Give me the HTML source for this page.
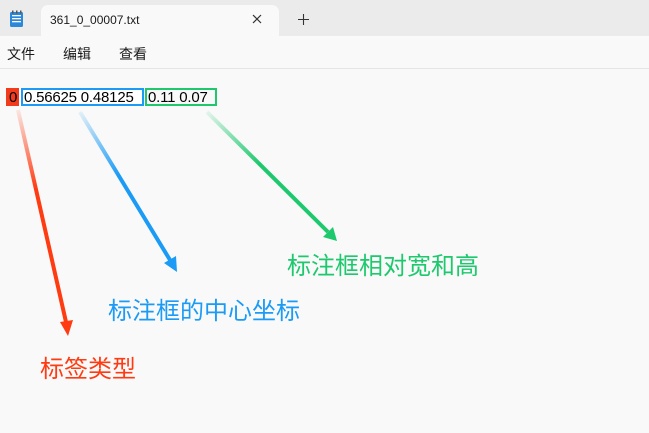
<!DOCTYPE html>
<html><head><meta charset="utf-8"><style>
*{margin:0;padding:0;box-sizing:border-box}
body{width:649px;height:433px;background:#f9f9f9;font-family:"Liberation Sans","Noto Sans CJK SC",sans-serif;position:relative;overflow:hidden}
.tabbar{position:absolute;left:0;top:0;width:649px;height:36px;background:#ebebeb}
.tab{position:absolute;left:41px;top:5px;width:238px;height:32px;background:#f9f9f9;border-radius:7px 7px 0 0}
.menu{position:absolute;top:36px;left:0;width:649px;height:33px;border-bottom:1px solid #e5e5e5;font-size:14px;color:#1a1a1a}
.menu span{position:absolute;top:8px}
.cjk{font-family:"Noto Sans CJK SC",sans-serif}
.t{position:absolute;font-size:15px;color:#000;top:88px;height:18px;line-height:15px;letter-spacing:-0.2px;white-space:nowrap;overflow:hidden}
.lbl{position:absolute;font-size:24px;line-height:26px;font-family:"Noto Sans CJK SC",sans-serif}
</style></head><body>
<div class="tabbar"></div>
<div class="tab"></div>
<svg style="position:absolute;left:9px;top:10px" width="16" height="18" viewBox="0 0 16 18"><rect x="1" y="2" width="13" height="15" rx="1.5" fill="#2b88d8"/><rect x="3" y="5" width="9" height="1.3" fill="#fff"/><rect x="3" y="8" width="9" height="1.3" fill="#fff"/><rect x="3" y="11" width="9" height="1.3" fill="#fff"/><rect x="3" y="0.5" width="1.5" height="3" fill="#555"/><rect x="7" y="0.5" width="1.5" height="3" fill="#555"/><rect x="11" y="0.5" width="1.5" height="3" fill="#555"/></svg>
<div style="position:absolute;left:50px;top:13px;font-size:12px;color:#1a1a1a">361_0_00007.txt</div>
<svg style="position:absolute;left:252px;top:14px" width="10" height="10"><path d="M1 1L9 9M9 1L1 9" stroke="#333" stroke-width="1.2"/></svg>
<svg style="position:absolute;left:298px;top:14px" width="11" height="11"><path d="M5.5 0V11M0 5.5H11" stroke="#333" stroke-width="1.1"/></svg>
<div class="menu cjk"><span style="left:7px">文件</span><span style="left:63px">编辑</span><span style="left:119px">查看</span></div>
<div class="t" style="left:6px;width:13px;background:#f23a1c;border:2px solid #f23a1c;padding-left:1px">0</div>
<div class="t" style="left:21px;width:123px;border:2px solid #1b9bf5;background:#fff;padding-left:1px">0.56625 0.48125</div>
<div class="t" style="left:145px;width:72px;border:2px solid #1ec96e;padding-left:1px">0.11 0.07</div>
<svg style="position:absolute;left:0;top:0" width="649" height="433">
<defs>
<linearGradient id="gr" x1="18" y1="110" x2="68" y2="336" gradientUnits="userSpaceOnUse"><stop offset="0" stop-color="#ff3b12" stop-opacity="0.1"/><stop offset="0.35" stop-color="#ff3b12"/></linearGradient>
<linearGradient id="gb" x1="80" y1="112" x2="177" y2="272" gradientUnits="userSpaceOnUse"><stop offset="0" stop-color="#1b9bf5" stop-opacity="0.1"/><stop offset="0.4" stop-color="#1b9bf5"/></linearGradient>
<linearGradient id="gg" x1="207" y1="112" x2="337" y2="241" gradientUnits="userSpaceOnUse"><stop offset="0" stop-color="#1ec96e" stop-opacity="0.1"/><stop offset="0.4" stop-color="#1ec96e"/></linearGradient>
</defs>
<path d="M18 110L66 322" stroke="url(#gr)" stroke-width="4"/>
<path d="M60 322L68 336L73 320Z" fill="#ff3b12"/>
<path d="M80 112L170 260" stroke="url(#gb)" stroke-width="4"/>
<path d="M164 263L177 272L176 256Z" fill="#1b9bf5"/>
<path d="M207 112L328 232" stroke="url(#gg)" stroke-width="4"/>
<path d="M323 237L337 241L333 227Z" fill="#1ec96e"/>
</svg>
<div class="lbl" style="left:287px;top:251px;color:#1ec96e">标注框相对宽和高</div>
<div class="lbl" style="left:108px;top:296px;color:#1b9bf5">标注框的中心坐标</div>
<div class="lbl" style="left:40px;top:354px;color:#ff3b12">标签类型</div>
</body></html>
